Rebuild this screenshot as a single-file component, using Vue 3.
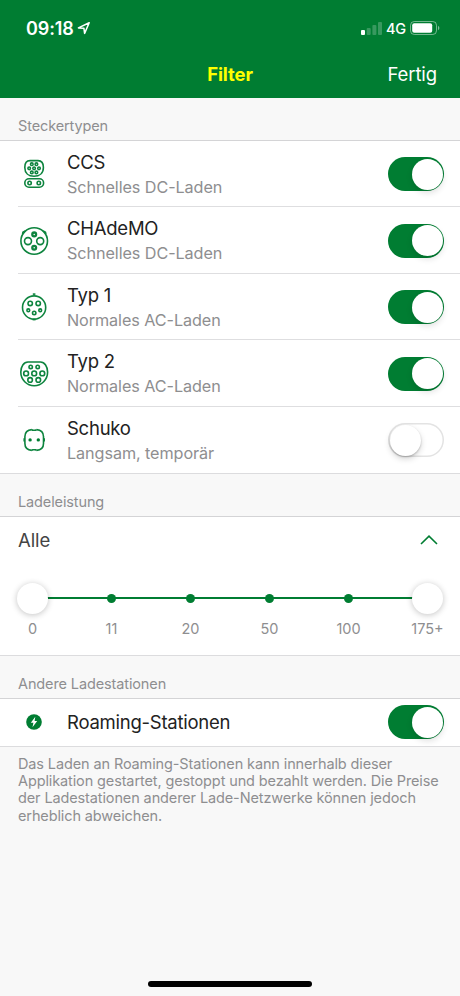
<template>
  <div class="screen">
    <header class="header">
      <div class="status">
        <div class="status-left">
          <span class="time">09:18</span>
          <svg class="location" viewBox="0 0 14 14">
            <path d="M1.4 6.9 12.2 1.7 7.6 12.4 6.9 7.2Z" />
          </svg>
        </div>
        <div class="status-right">
          <svg class="signal" viewBox="0 0 21 13">
            <rect x="0" y="8" width="4" height="5" rx="1" />
            <rect class="weak" x="5.7" y="6" width="4" height="7" rx="1" />
            <rect class="weak" x="11.4" y="3" width="4" height="10" rx="1" />
            <rect class="weak" x="17" y="0" width="4" height="13" rx="1" />
          </svg>
          <span class="network">4G</span>
          <svg class="battery" viewBox="0 0 30 14">
            <rect class="case" x="0.5" y="0.5" width="26" height="13" rx="3.8" />
            <rect x="2.2" y="2.2" width="20" height="9.6" rx="2" />
            <path class="cap" d="M28 4.7q1.4.8 1.4 2.3T28 9.3Z" />
          </svg>
        </div>
      </div>
      <div class="nav">
        <span></span>
        <h1 class="title">Filter</h1>
        <button class="done">Fertig</button>
      </div>
    </header>

    <h2 class="section">Steckertypen</h2>
    <ul class="list">
      <li v-for="s in stecker" :key="s.id" class="row">
        <svg class="icon" viewBox="0 0 32 32">
          <path v-for="(d, i) in s.shapes" :key="i" :d="d" />
          <circle v-for="(p, i) in s.pins" :key="i" :cx="p[0]" :cy="p[1]" :r="p[2]" :class="p[3]" />
        </svg>
        <div class="row-body">
          <div class="text">
            <span class="name">{{ s.name }}</span>
            <span class="info">{{ s.info }}</span>
          </div>
          <button class="toggle" :class="{ on: s.aktiv }" @click="s.aktiv = !s.aktiv"><i></i></button>
        </div>
      </li>
    </ul>

    <h2 class="section">Ladeleistung</h2>
    <div class="power">
      <div class="power-head">
        <span>Alle</span>
        <svg class="chevron" viewBox="0 0 18 10"><path d="M1 9 9 1.2 17 9" /></svg>
      </div>
      <div class="slider">
        <div v-for="(wert, i) in stufen" :key="wert" class="stop">
          <div class="mark">
            <i :class="i === 0 || i === stufen.length - 1 ? 'knob' : 'dot'"></i>
          </div>
          <span>{{ wert }}</span>
        </div>
      </div>
    </div>

    <h2 class="section">Andere Ladestationen</h2>
    <div class="row single">
      <svg class="icon" viewBox="0 0 32 32">
        <circle class="disc" cx="16" cy="16" r="7.8" />
        <path class="bolt" d="M17.3 10.8 12.8 16.8H15.4L14.5 21.2 19.2 15.1H16.6Z" />
      </svg>
      <div class="row-body">
        <span class="name">Roaming-Stationen</span>
        <button class="toggle" :class="{ on: roaming }" @click="roaming = !roaming"><i></i></button>
      </div>
    </div>
    <p class="note">
      Das Laden an Roaming-Stationen kann innerhalb dieser<br />
      Applikation gestartet, gestoppt und bezahlt werden. Die Preise<br />
      der Ladestationen anderer Lade-Netzwerke können jedoch<br />
      erheblich abweichen.
    </p>

    <div class="home"></div>
  </div>
</template>

<script setup>
import { ref } from 'vue'

// pins: [x, y, radius, class]
const stecker = ref([
  {
    id: 'ccs', name: 'CCS', info: 'Schnelles DC-Laden', aktiv: true,
    shapes: [
      'M12 2.6H20Q25.4 2.6 25.4 9.4C25.4 15 21.5 18.2 16 18.2S6.8 15 6.8 9.4Q6.8 2.6 12 2.6Z',
      'M11 20.8H21.4A4.2 4.2 0 0 1 21.4 29.2H11A4.2 4.2 0 0 1 11 20.8Z',
    ],
    pins: [
      [13.8, 6.2, 1.3], [18.4, 6.2, 1.3],
      [11.2, 10.3, 1.3], [16.1, 10.3, 1.3], [21, 10.3, 1.3],
      [13.8, 14.4, 1.3], [18.4, 14.4, 1.3],
      [11.6, 25, 1.7], [20.8, 25, 1.7],
    ],
  },
  {
    id: 'chademo', name: 'CHAdeMO', info: 'Schnelles DC-Laden', aktiv: true,
    shapes: [
      'M16.2 2.7A13.3 13.3 0 1 1 16.2 29.3 13.3 13.3 0 0 1 16.2 2.7Z',
      'M4.6 9.2 4.9 7.3 7.3 6',
      'M27.8 9.2 27.5 7.3 25.1 6',
    ],
    pins: [[16.2, 9.4, 1.9, 'thick'], [16.2, 22.8, 1.9, 'thick'], [10, 16.1, 3.5], [22.2, 16.1, 3.5]],
  },
  {
    id: 'typ1', name: 'Typ 1', info: 'Normales AC-Laden', aktiv: true,
    shapes: [
      'M16.1 4.9A11.6 11.6 0 1 1 16.1 28.1 11.6 11.6 0 0 1 16.1 4.9Z',
      'M14.8 3.1H17.4',
      'M14.6 28.6H17.6',
    ],
    pins: [[12.2, 12.4, 2.2], [20.2, 12.4, 2.2], [10.3, 19.3, 1.4], [22.2, 19.3, 1.4], [16.2, 21.9, 1.7]],
  },
  {
    id: 'typ2', name: 'Typ 2', info: 'Normales AC-Laden', aktiv: true,
    shapes: ['M10 4H22.4C26.6 4 29.6 8.6 29.6 14A13.4 13.7 0 0 1 2.8 14C2.8 8.6 5.8 4 10 4Z'],
    pins: [
      [12.7, 8.9, 1.7], [19.7, 8.9, 1.7],
      [8.1, 15.4, 2.4], [16.2, 15.4, 2.4], [24.3, 15.4, 2.4],
      [12.1, 21.9, 2.3], [20.3, 21.9, 2.3],
    ],
  },
  {
    id: 'schuko', name: 'Schuko', info: 'Langsam, temporär', aktiv: false,
    shapes: [
      'M13.9 5.6C9.5 6 6.9 8.6 6.9 12.6V19.4C6.9 23.4 9.5 26 13.9 26.4',
      'M18.5 5.6C22.9 6 25.5 8.6 25.5 12.6V19.4C25.5 23.4 22.9 26 18.5 26.4',
      'M14 5.3 14.6 6.3H17.8L18.4 5.3',
      'M14 26.7 14.6 25.7H17.8L18.4 26.7',
      'M6.2 14.2V17.6M26.2 14.2V17.6',
    ],
    pins: [[12.1, 15.9, 1.7, 'solid'], [20.3, 15.9, 1.7, 'solid']],
  },
])

const stufen = ['0', '11', '20', '50', '100', '175+']
const roaming = ref(true)
</script>

<style>
body { margin: 0; background: #f8f8f8; }
</style>

<style scoped>
.screen { display: flex; flex-direction: column; width: 460px; height: 996px; box-sizing: border-box; background: #f8f8f8; color: #222; font-family: Inter, "Liberation Sans", sans-serif; overflow: hidden; }
button { border: 0; padding: 0; background: none; font: inherit; color: inherit; }

.header { flex: none; height: 98px; background: #007d32; color: #fff; }
.status { display: flex; justify-content: space-between; align-items: center; height: 56px; padding: 0 20px 0 26px; }
.status-left, .status-right { display: flex; align-items: center; }
.time { font-size: 18px; font-weight: 600; letter-spacing: -0.1px; }
.location { width: 14px; height: 14px; margin-left: 3px; fill: none; stroke: #fff; stroke-width: 1.5; stroke-linejoin: round; }
.signal { width: 21px; height: 13px; fill: #fff; }
.weak { fill-opacity: .22; }
.network { margin: 1px 4px 0 4px; font-size: 14.5px; font-weight: 500; letter-spacing: -0.2px; }
.battery { width: 30px; height: 14px; fill: #fff; }
.case { fill: none; stroke: #fff; stroke-opacity: .45; }
.cap { fill-opacity: .5; }
.nav { display: grid; grid-template-columns: 1fr auto 1fr; align-items: center; height: 35px; padding: 0 23px; }
.title { margin: 0; font-size: 18.5px; font-weight: 700; color: #ffff00; letter-spacing: -0.1px; }
.done { justify-self: end; font-size: 18.5px; letter-spacing: -0.1px; }

.section { flex: none; display: flex; align-items: flex-end; height: 43px; margin: 0; padding: 0 18px 5px; box-sizing: border-box; border-bottom: 1px solid #d4d4d6; font-size: 14.5px; line-height: 18px; font-weight: 400; letter-spacing: -0.12px; color: #8e8e90; }
.list { flex: none; height: 333px; box-sizing: border-box; margin: 0; padding: 0; list-style: none; background: #fff; border-bottom: 1px solid #dcdcde; }
.row { display: flex; align-items: center; height: 66.5px; padding-left: 18px; position: relative; }
.row + .row::before { content: ""; position: absolute; top: -1.2px; left: 18px; right: 0; height: 1px; background: #dedee0; }
.icon { flex: none; width: 32px; height: 32px; margin-right: 17px; fill: none; stroke: #0d843e; stroke-width: 1.6; stroke-linejoin: round; }
.thick { stroke-width: 2.3; }
.solid, .disc { fill: #007d32; stroke: none; }
.bolt { fill: #fff; stroke: none; }
.row-body { display: flex; flex: 1; justify-content: space-between; align-items: center; padding-right: 16px; }
.text { display: flex; flex-direction: column; gap: 1px; }
.name { font-size: 18.5px; line-height: 24px; letter-spacing: -0.25px; }
.info { font-size: 16.2px; line-height: 24px; letter-spacing: -0.08px; color: #8e8e90; }

.toggle { display: flex; width: 56px; height: 34px; padding: 1.5px; box-sizing: border-box; border-radius: 17px; background: #fff; box-shadow: inset 0 0 0 1.5px #e3e3e3; }
.toggle i { width: 31px; height: 31px; border-radius: 50%; background: #fff; box-shadow: 0 3px 6px rgba(0,0,0,.16), 0 1px 2px rgba(0,0,0,.22); }
.toggle.on { justify-content: flex-end; background: #007d32; box-shadow: none; }
.toggle.on i { box-shadow: 0 3px 6px rgba(0,0,0,.12); }

.power { flex: none; height: 139px; box-sizing: border-box; background: #fff; border-bottom: 1px solid #dcdcde; }
.power-head { display: flex; justify-content: space-between; align-items: center; height: 45px; padding: 0 22px 0 18px; font-size: 18.5px; letter-spacing: -0.1px; color: #444; }
.chevron { width: 18px; height: 10px; margin-top: 1px; fill: none; stroke: #007d32; stroke-width: 1.6; }
.slider { position: relative; display: flex; justify-content: space-between; padding: 20.5px 17px 0; }
.slider::before { content: ""; position: absolute; top: 35px; left: 32px; right: 32px; height: 2px; background: #007d32; }
.stop { position: relative; display: flex; flex-direction: column; align-items: center; width: 31px; font-size: 14.5px; line-height: 18px; color: #8e8e90; white-space: nowrap; }
.mark { display: flex; align-items: center; height: 31px; margin-bottom: 6.5px; }
.dot { width: 9px; height: 9px; border-radius: 50%; background: #007d32; }
.knob { width: 31px; height: 31px; border-radius: 50%; background: #fff; box-shadow: 0 1px 6px rgba(0,0,0,.24); }

.single { flex: none; height: 48px; padding-bottom: 1px; box-sizing: border-box; background: #fff; border-bottom: 1px solid #dcdcde; }
.note { margin: 8px 0 0; padding-left: 18px; font-size: 14.5px; line-height: 17.2px; letter-spacing: -0.12px; color: #8e8e90; white-space: nowrap; }
.home { width: 164px; height: 6px; margin: auto auto 9px; border-radius: 3px; background: #000; }
</style>
